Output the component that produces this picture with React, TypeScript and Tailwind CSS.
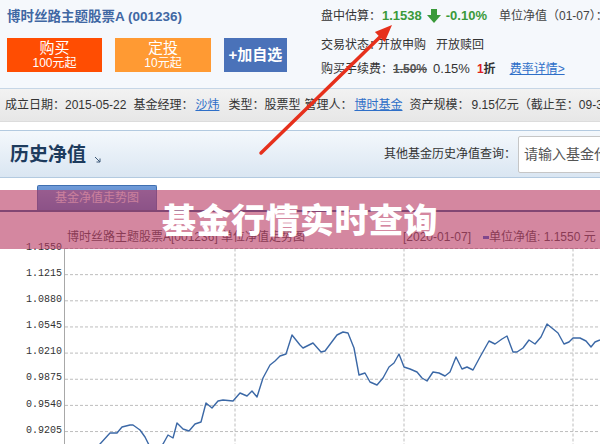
import type { ReactNode } from "react";

const FONT = "font-['Liberation_Sans','Noto_Sans_CJK_SC',sans-serif]";

// nav points for the trend line, in page pixels
const NAV_POINTS: [number, number][] = [
  [85, 455], [100, 444], [110, 433], [117, 433], [122, 427], [130, 425], [133, 425], [140, 430],
  [145, 437], [150, 447], [156, 452], [163, 444], [168, 435], [173, 438], [177, 423], [183, 429],
  [189, 431], [195, 424], [201, 422], [206, 403], [212, 408], [218, 401], [223, 400], [233, 401],
  [240, 393], [247, 396], [252, 391], [257, 397], [263, 378], [270, 365], [275, 361], [280, 356],
  [286, 354], [292, 335], [300, 345], [303, 348], [313, 343], [321, 352], [325, 351], [337, 335],
  [343, 332], [348, 333], [354, 348], [359, 375], [365, 373], [370, 382], [377, 385], [383, 378],
  [389, 367], [394, 363], [399, 354], [404, 367], [410, 369], [417, 372], [422, 378], [427, 381],
  [433, 372], [439, 373], [445, 376], [450, 372], [456, 357], [462, 369], [467, 367], [473, 370],
  [480, 357], [489, 341], [495, 344], [502, 339], [507, 336], [513, 352], [517, 352], [523, 348],
  [529, 340], [535, 344], [541, 337], [547, 324], [558, 333], [564, 344], [569, 342], [573, 338],
  [580, 338], [586, 341], [591, 347], [595, 342], [600, 340],
];

const Y_LABELS = ["1.1550", "1.1215", "1.0880", "1.0545", "1.0210", "0.9875", "0.9540", "0.9205"];

export default function App() {
  return (
    <div className={`relative h-[444px] w-[600px] overflow-hidden bg-white text-[12px] text-[#333] ${FONT}`}>
      <FundHeader />
      <InfoBar />
      <HistoryHeader />
      <ChartTabs />
      <div className="flex h-[28px] whitespace-nowrap pl-[67px] pt-[18px] text-[12px] leading-[14px] text-[#444]">
        <span className="w-[336px] shrink-0">博时丝路主题股票A[001236] 单位净值走势图</span>
        <span className="w-[80px] shrink-0">[2020-01-07]</span>
        <span className="mt-[6px] h-[3px] w-[6px] shrink-0 bg-[#2f5fd0]" />
        <span>单位净值: 1.1550 元</span>
      </div>
      <NavChart />

      <div className="absolute inset-x-0 top-[190px] flex h-[59px] items-center justify-center bg-[rgba(183,55,97,0.6)] pt-[3px]">
        <span className="text-[34px] font-black leading-none tracking-[0.5px] text-white">基金行情实时查询</span>
      </div>

      <svg className="pointer-events-none absolute inset-0" width={600} height={444}>
        <line x1={261} y1={153} x2={380} y2={37} stroke="#e6301c" strokeWidth={3.5} strokeLinecap="round" />
        <polygon points="392,25 384.7,41.9 374.9,31.9" fill="#e6301c" />
      </svg>
    </div>
  );
}

function FundHeader() {
  return (
    <header className="flex h-[89px] border-b border-[#c6d6e6] bg-[#f5f8fc]">
      <div className="w-[314px] shrink-0 pl-[7px]">
        <div className="pt-[8px] text-[13.5px] font-bold leading-[17px] text-[#4067a3]">博时丝路主题股票A (001236)</div>
        <div className="mt-[13px] flex gap-[13px]">
          <ActionButton className="w-[95px] bg-[#ff4d02]" label="购买" note="100元起" />
          <ActionButton className="w-[96px] bg-[#ff9a33]" label="定投" note="10元起" />
          <button className="h-[34px] w-[63px] bg-[#4a72b9] text-[15px] font-bold text-white" type="button">
            +加自选
          </button>
        </div>
      </div>
      <div className="min-w-0 flex-1 whitespace-nowrap pl-[7px] pt-[8px] leading-[16px]">
        <div className="flex items-center">
          <span className="shrink-0">盘中估算：</span>
          <span className="ml-[1px] shrink-0 text-[13px] font-bold text-[#3a9a3a]">1.1538</span>
          <DownArrow />
          <span className="ml-[5px] shrink-0 text-[13px] font-bold text-[#3a9a3a]">-0.10%</span>
          <span className="ml-[12px] shrink-0 text-[#444]">单位净值（01-07）：</span>
        </div>
        <div className="mt-[13px] flex">
          <span>交易状态：</span>
          <span className="-ml-[3px]">开放申购</span>
          <span className="ml-[10px]">开放赎回</span>
        </div>
        <div className="mt-[8px] flex items-center">
          <span>购买手续费：</span>
          <span className="font-bold text-[#555] line-through">1.50%</span>
          <span className="ml-[6px] text-[13px] text-[#333]">0.15%</span>
          <span className="ml-[7px] font-bold">
            <span className="text-[#e02020]">1</span>折
          </span>
          <a className="ml-[14px] text-[#2e6fc8] underline" href="#">
            费率详情&gt;
          </a>
        </div>
      </div>
    </header>
  );
}

function ActionButton({ className, label, note }: { className: string; label: string; note: string }) {
  return (
    <button className={`flex h-[34px] flex-col items-center justify-center text-white ${className}`} type="button">
      <span className="text-[15px] leading-[16px]">{label}</span>
      <span className="text-[12px] leading-[14px]">{note}</span>
    </button>
  );
}

function DownArrow() {
  return (
    <svg className="ml-[5px] shrink-0" width={14} height={14} viewBox="0 0 14 14">
      <rect x={4} y={0} width={6} height={7} fill="#3a9a3a" />
      <polygon points="0,6 14,6 7,14" fill="#3a9a3a" />
    </svg>
  );
}

function InfoBar() {
  return (
    <div className="flex h-[33px] items-center whitespace-nowrap border-b border-[#dcdcdc] bg-gradient-to-b from-[#f2f2f2] to-[#e7e7e7] pl-[5px] text-[#333]">
      <span>成立日期：</span>
      <span>2015-05-22</span>
      <span className="ml-[7px]">基金经理：</span>
      <Link>沙炜</Link>
      <span className="ml-[9px]">类型：股票型</span>
      <span className="ml-[4px]">管理人：</span>
      <Link>博时基金</Link>
      <span className="ml-[7px]">资产规模：</span>
      <span className="ml-[2px]">9.15亿元（截止至：09-30</span>
    </div>
  );
}

function Link({ children }: { children: ReactNode }) {
  return (
    <a className="ml-[2px] text-[#2e6fc8] underline" href="#">
      {children}
    </a>
  );
}

function HistoryHeader() {
  return (
    <section className="mt-[8px] flex h-[48px] items-center border-y border-[#b3cae0] bg-gradient-to-b from-[#f4f8fc] to-[#dae6f2]">
      <h2 className="pl-[10px] text-[19px] font-bold leading-none text-[#1d3b5d]">历史净值</h2>
      <svg className="ml-[8px] mt-[10px]" width={7} height={7} viewBox="0 0 7 7">
        <path d="M1 1 L6 6 M6 2.5 V6 H2.5" stroke="#3c5878" strokeWidth={1} fill="none" />
      </svg>
      <div className="ml-auto flex items-center">
        <span className="text-[12px] text-[#333]">其他基金历史净值查询：</span>
        <input
          className="-mr-[24px] ml-[2px] h-[37px] w-[106px] rounded-[2px] border border-[#c6c6c6] bg-white pl-[5px] text-[14px] text-[#555] placeholder:text-[#555] outline-none"
          placeholder="请输入基金代码"
          readOnly
        />
      </div>
    </section>
  );
}

function ChartTabs() {
  return (
    <div className="mt-[7px] flex h-[27px] items-end border-b-2 border-[#325c8e] pl-[37px]">
      <div className="flex h-[25px] w-[120px] items-center justify-center rounded-t-[2px] border-x border-t border-[#3f6fb0] bg-gradient-to-b from-[#6f9ad8] to-[#4c7dc2] text-[12px] text-[#e6ecf6]">
        基金净值走势图
      </div>
    </div>
  );
}

function NavChart() {
  const top = 248.5;
  const step = 26.15;
  const rows = Y_LABELS.map((label, i) => ({ label, y: top + step * i }));
  const path = NAV_POINTS.map(([x, y]) => `${x},${y}`).join(" ");

  return (
    <svg className="block" width={600} height={204} viewBox="0 240 600 204">
      {rows.map((row) => (
        <g key={row.label}>
          <line x1={65} x2={600} y1={row.y} y2={row.y} stroke="#bdbdbd" strokeDasharray="3 2" />
          <text
            x={62}
            y={row.y - 1.5}
            textAnchor="end"
            dominantBaseline="middle"
            fontFamily="Liberation Mono, monospace"
            fontSize={10}
            fill="#333"
          >
            {row.label}
          </text>
        </g>
      ))}
      {[235, 404, 573].map((x) => (
        <line key={x} x1={x} x2={x} y1={top} y2={444} stroke="#bdbdbd" strokeDasharray="3 2" />
      ))}
      <line x1={64.5} x2={64.5} y1={top} y2={444} stroke="#a8a8a8" />
      <polyline points={path} fill="none" stroke="#3b68a6" strokeWidth={1.4} strokeLinejoin="round" />
    </svg>
  );
}
